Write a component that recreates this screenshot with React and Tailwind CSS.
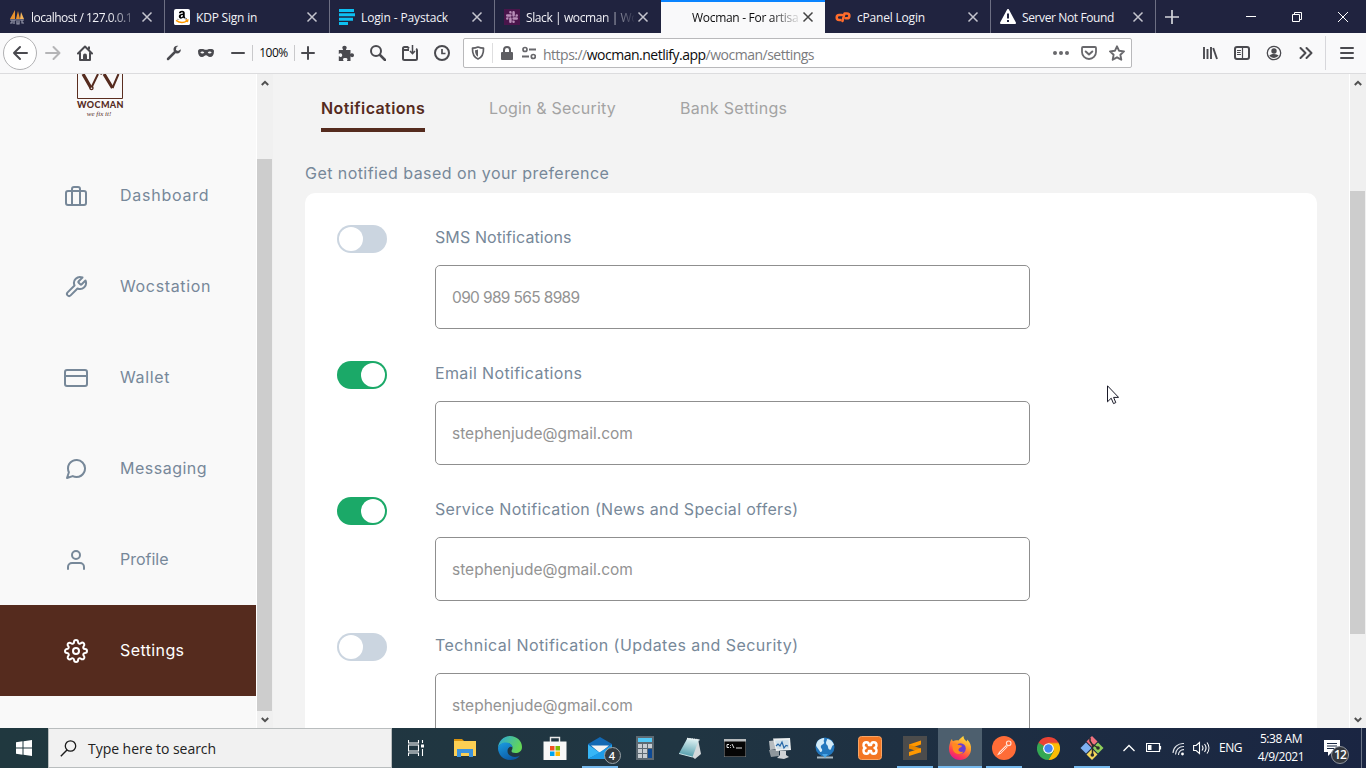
import React from "react";
import { FiBriefcase, FiTool, FiCreditCard, FiMessageCircle, FiUser, FiSettings } from "react-icons/fi";
import { SiSlack } from "react-icons/si";
import { FaAmazon } from "react-icons/fa";

const cx = (...c) => c.filter(Boolean).join(" ");

function Svg({ size = 16, w, h, box, className, children, ...rest }) {
  return (
    <svg
      width={w || size}
      height={h || size}
      viewBox={box || `0 0 ${w || size} ${h || size}`}
      fill="none"
      className={cx("block shrink-0", className)}
      {...rest}
    >
      {children}
    </svg>
  );
}

/* ---------- tab strip ---------- */

const SailIcon = () => (
  <Svg>
    <path d="M1 10 6 1v9zM7 10 9 2l2 8z" fill="#e8912d" />
    <path d="M11 10 12 3l3 7z" fill="#f5b55a" />
    <path d="M1 11h14M1 14h2v-3M5 11v4M8 12v3h2v-3M13 11v3h2" stroke="#9a9cae" strokeWidth="1.2" />
  </Svg>
);
const AmazonIcon = () => (
  <span className="relative block h-4 w-4 shrink-0 overflow-hidden rounded-[2px] bg-white">
    <FaAmazon className="absolute left-[2px] top-[1px] h-3 w-3 text-black" />
    <Svg className="absolute left-0 top-0">
      <path d="M0 10.500h16V16H0z" fill="#fff" />
      <path d="M2 11.300c3.500 2.600 8 2.600 11 .6M11.500 11.200l2.300-.2-.5 2.200" stroke="#f90" strokeWidth="1.500" />
    </Svg>
  </span>
);
const PaystackIcon = () => (
  <Svg>
    <path d="M0 0h15v3H0zM0 4.300h16v3H0zM0 8.700h14v3H0zM0 13h9v3H0z" fill="#0dc0f3" />
  </Svg>
);
const SlackTile = () => (
  <span className="flex h-4 w-4 shrink-0 items-center justify-center bg-[#4a154b]">
    <SiSlack className="h-3 w-3 text-[#b98fb9]" />
  </span>
);
const CpIcon = () => (
  <Svg>
    <path d="M7 6H4.200a2.500 2.500 0 0 0 0 5H5.500" stroke="#ff6c2c" strokeWidth="2.500" strokeLinecap="round" />
    <path d="M7.500 12 9.500 4.500h2.500a2.400 2.400 0 0 1 0 4.800H10.800" stroke="#ff6c2c" strokeWidth="2.500" strokeLinecap="round" strokeLinejoin="round" />
  </Svg>
);
const WarnIcon = () => (
  <Svg>
    <path d="M8 1 15 14H1z" fill="#fff" stroke="#fff" strokeWidth="2" strokeLinejoin="round" />
    <path d="M8 4.500v5M8 11v2" stroke="#20233f" strokeWidth="2" />
  </Svg>
);

const CloseX = ({ dark }) => (
  <Svg size={12} className={dark ? "text-[#444]" : "text-[#c4c5ce]"}>
    <path d="M1.500 1.500l9 9M10.500 1.500l-9 9" stroke="currentColor" strokeWidth="1.500" />
  </Svg>
);

const TABS = [
  { label: "localhost / 127.0.0.1", icon: <SailIcon />, fade: true, track: "tracking-[-0.5px]" },
  { label: "KDP Sign in", icon: <AmazonIcon />, track: "tracking-[-0.2px]" },
  { label: "Login - Paystack", icon: <PaystackIcon />, track: "tracking-[-0.13px]" },
  { label: "Slack | wocman | Wo", icon: <SlackTile />, fade: true, track: "tracking-[-0.4px]" },
  { label: "Wocman - For artisa", icon: null, fade: true, active: true, track: "tracking-[-0.3px]" },
  { label: "cPanel Login", icon: <CpIcon />, track: "tracking-[-0.2px]" },
  { label: "Server Not Found", icon: <WarnIcon />, track: "tracking-[-0.38px]" },
];

function TabStrip() {
  return (
    <div className="flex h-[33px] shrink-0 bg-[#20233f]">
      {TABS.map((t, i) => (
        <div
          key={t.label}
          className={cx(
            "flex h-[33px] shrink-0 items-center border-r pl-[9px] pt-px",
            i === 3 ? "w-[166px] pr-[11px]" : "w-[165px] pr-[11px]",
            t.active
              ? "border-[#20233f] bg-[#f9f9fa] text-[#0c0c0d] shadow-[inset_0_2px_0_#0a84ff]"
              : i === 3
                ? "border-[#20233f] text-[#f2f2f7]"
                : "border-[#6d6f83] text-[#f2f2f7]"
          )}
        >
          {t.icon || <span className="w-4 shrink-0" />}
          <span
            className={cx(
              "ml-[6px] mt-[2px] w-[108px] shrink-0 whitespace-nowrap text-[12px] leading-4",
              t.track,
              t.fade && "[mask-image:linear-gradient(90deg,#000_72%,transparent_102%)]"
            )}
          >
            {t.label}
          </span>
          <span className="ml-auto">
            <CloseX dark={t.active} />
          </span>
        </div>
      ))}
      <div className="flex w-[32px] items-center justify-center">
        <Svg size={14} className="text-[#d4d5db]">
          <path d="M7 0v14M0 7h14" stroke="currentColor" strokeWidth="1.700" />
        </Svg>
      </div>
      <div className="ml-auto flex items-center text-white">
        <span className="flex w-[46px] justify-center">
          <Svg size={10}><path d="M0 4.500h10" stroke="currentColor" /></Svg>
        </span>
        <span className="flex w-[46px] justify-center">
          <Svg size={10}><path d="M.5 2.500h7v7h-7zM2.500 2.500v-2h7v7h-2" stroke="currentColor" /></Svg>
        </span>
        <span className="flex w-[46px] justify-center">
          <Svg size={10}><path d="M0 0l10 10M10 0L0 10" stroke="currentColor" /></Svg>
        </span>
      </div>
    </div>
  );
}

/* ---------- navigation bar ---------- */

const Cell = ({ children, w = "w-8" }) => (
  <span className={cx("flex h-full shrink-0 items-center justify-center", w)}>{children}</span>
);
const stroke = { stroke: "currentColor", strokeWidth: 2, strokeLinecap: "round", strokeLinejoin: "round" };

function NavBar() {
  return (
    <div className="flex h-10 shrink-0 items-center bg-[#f9f9fa] text-[#4a4a4f]">
      <span className="ml-[3px] flex h-[34px] w-[34px] shrink-0 items-center justify-center rounded-full border border-[#b1b1b3] bg-white">
        <Svg><path d="M15 8H2M8 2 2 8l6 6" {...stroke} /></Svg>
      </span>
      <Cell><Svg className="text-[#b5b5b7]"><path d="M1 8h13M8.500 2l6 6-6 6" {...stroke} /></Svg></Cell>
      <Cell>
        <Svg>
          <path d="M1 8.500 8 1.500l7 7" {...stroke} />
          <path d="M3 8v7h10V8" {...stroke} />
          <path d="M6 15v-4.500a2 2 0 0 1 4 0V15z" fill="currentColor" />
          <path d="M12 1.500v3" stroke="currentColor" strokeWidth="2" />
        </Svg>
      </Cell>
      <span className="w-[57px] shrink-0" />
      <Cell>
        <Svg>
          <path d="M2 14l6.500-6.500" stroke="currentColor" strokeWidth="2.500" strokeLinecap="round" />
          <path d="M14.800 4.200 12 6 9.900 4.900 10.500 2l1.800-1.100C9.800.3 7.300 2 7.500 4.800c.1 2.400 1.700 3.700 3.600 3.700 2.300 0 4-1.900 3.700-4.300z" fill="currentColor" />
        </Svg>
      </Cell>
      <Cell>
        <Svg>
          <path d="M0 6c0-1.700 2-2 4-2 1.800 0 2.700.8 4 .8S10.200 4 12 4c2 0 4 .3 4 2 0 4-1.500 6-4 6-2 0-2.700-1.700-4-1.700S6 12 4 12C1.500 12 0 10 0 6zm2.300 1.500c1 1.300 3 1.300 4 .2-.8-1.500-3-1.700-4-.2zm7.400.2c1 1.100 3 1.100 4-.2-1-1.500-3.200-1.300-4 .2z" fill="currentColor" fillRule="evenodd" />
        </Svg>
      </Cell>
      <Cell><Svg size={14}><path d="M1 7h12" {...stroke} /></Svg></Cell>
      <span className="-ml-[2px] h-4 w-px shrink-0 bg-[#c9c9cb]" />
      <span className="flex w-[41px] shrink-0 justify-center text-[12px] leading-4 tracking-[-0.5px] text-[#0c0c0d]">100%</span>
      <span className="h-4 w-px shrink-0 bg-[#c9c9cb]" />
      <Cell w="w-[25px]"><Svg size={14}><path d="M1 7h12M7 1v12" {...stroke} /></Svg></Cell>
      <span className="w-[10px] shrink-0" />
      <Cell>
        <Svg>
          <path d="M6.500.8c1.300 0 2.200.9 2.200 2 0 .8-.7 1.200-.7 2.200h4.500v4c.6 0 .6-.7 1.500-.7 1.200 0 2 .8 2 1.900s-.8 2-2 2c-.9 0-.9-.7-1.500-.7V16H9c0-1 .5-1 .5-1.800S8.500 13 7.200 13s-2.200.5-2.200 1.200S5.500 15 5.500 16H.8v-4.700c.7 0 .9.7 1.700.7 1 0 1.700-.8 1.700-1.800S3.500 8.300 2.500 8.300C1.700 8.300 1.500 9 .8 9V5H5c0-1-.7-1.400-.7-2.200 0-1.100.9-2 2.200-2z" fill="currentColor" />
        </Svg>
      </Cell>
      <Cell><Svg><circle cx="6" cy="6" r="5" stroke="currentColor" strokeWidth="2" /><path d="M10 10l5 5" {...stroke} strokeWidth="2.500" /></Svg></Cell>
      <Cell>
        <Svg>
          <path d="M7 3.500 5.500 2H2.500A1.500 1.500 0 0 0 1 3.500v10A1.500 1.500 0 0 0 2.500 15h11a1.500 1.500 0 0 0 1.500-1.500v-8A1.500 1.500 0 0 0 14 4M1 5h6" stroke="currentColor" strokeWidth="2" />
          <path d="M10.500 0v8M8 6l2.500 2.700L13 6" stroke="currentColor" strokeWidth="1.500" />
        </Svg>
      </Cell>
      <Cell><Svg><circle cx="8" cy="8" r="7" stroke="currentColor" strokeWidth="2" /><path d="M8 4v4.500h3.500" stroke="currentColor" strokeWidth="1.700" /></Svg></Cell>

      <div className="ml-[5px] flex h-[30px] w-[669px] shrink-0 items-center rounded-[2px] border border-[#b9b9bb] bg-white text-[#68686c]">
        <Cell w="w-7">
          <Svg size={14} className="text-[#5f5f63]">
            <path d="M7 1c2 .9 3.800 1.200 5.500 1.200C12.700 7 11.500 11 7 13 2.500 11 1.300 7 1.500 2.200 3.200 2.200 5 1.900 7 1z" stroke="currentColor" strokeWidth="1.700" strokeLinejoin="round" />
            <path d="M7 3.500v7.300C4.900 9.500 4 7.500 4 4.300 5.200 4.200 6.200 3.900 7 3.500z" fill="currentColor" />
          </Svg>
        </Cell>
        <span className="h-5 w-px shrink-0 bg-[#dededf]" />
        <Cell w="w-[28px]">
          <Svg size={14} className="text-[#5f5f63]">
            <path d="M1 7a1 1 0 0 1 1-1h10a1 1 0 0 1 1 1v6a1 1 0 0 1-1 1H2a1 1 0 0 1-1-1z" fill="currentColor" />
            <path d="M4 7V4a3 3 0 0 1 6 0v3" stroke="currentColor" strokeWidth="2" />
          </Svg>
        </Cell>
        <Cell w="w-4">
          <Svg size={14}>
            <circle cx="3" cy="3.500" r="2" stroke="currentColor" strokeWidth="1.700" />
            <path d="M7 3.500h7M0 10.500h7" stroke="currentColor" strokeWidth="2" />
            <circle cx="11.300" cy="10.500" r="2" stroke="currentColor" strokeWidth="1.700" />
          </Svg>
        </Cell>
        <span className="ml-[6px] mt-[3px] whitespace-nowrap text-[14px] leading-5 tracking-[-0.5px] text-[#7b7b7e]">
          https://<span className="text-[#0c0c0d]">wocman.netlify.app</span>/wocman/settings
        </span>
        <span className="ml-auto flex h-full">
          <Cell w="w-7"><Svg><circle cx="2" cy="8" r="2" fill="currentColor" /><circle cx="8" cy="8" r="2" fill="currentColor" /><circle cx="14" cy="8" r="2" fill="currentColor" /></Svg></Cell>
          <Cell w="w-7">
            <Svg>
              <path d="M2 2h12a1 1 0 0 1 1 1v4a7 7 0 0 1-14 0V3a1 1 0 0 1 1-1z" stroke="currentColor" strokeWidth="1.800" />
              <path d="M4.700 6.500 8 9.500l3.300-3" {...stroke} />
            </Svg>
          </Cell>
          <Cell w="w-7">
            <Svg><path d="M8 1.300l2.100 4.500 4.900.6-3.600 3.400.9 4.900L8 12.300l-4.300 2.400.9-4.900L1 6.400l4.900-.6z" stroke="currentColor" strokeWidth="1.900" strokeLinejoin="round" /></Svg>
          </Cell>
        </span>
      </div>

      <span className="w-[62px] shrink-0" />
      <Cell><Svg><path d="M2 2v12M5.500 4v10M9 2v12M11.200 3l3.800 11" stroke="currentColor" strokeWidth="1.900" /></Svg></Cell>
      <Cell>
        <Svg>
          <rect x="1" y="2" width="14" height="12" rx="2" stroke="currentColor" strokeWidth="2" />
          <path d="M8.500 2v12M3 5.500h4M3 7.500h3.500M3 9.500h4" stroke="currentColor" strokeWidth="1.200" />
        </Svg>
      </Cell>
      <Cell>
        <Svg>
          <circle cx="8" cy="8" r="6.700" stroke="currentColor" strokeWidth="1.300" />
          <circle cx="8" cy="6" r="2.700" fill="currentColor" />
          <path d="M3.300 10.300c1.500-.3 2.200-1.200 4.700-1.200s3.200.9 4.700 1.200A5.500 5.500 0 0 1 8 13a5.500 5.500 0 0 1-4.700-2.700z" fill="currentColor" />
        </Svg>
      </Cell>
      <Cell><Svg><path d="M2.500 3l5 5-5 5M8.500 3l5 5-5 5" {...stroke} /></Svg></Cell>
      <span className="ml-[3px] h-[34px] w-px shrink-0 bg-[#d7d7db]" />
      <Cell w="w-[42px]"><Svg size={14}><path d="M1 2h12M1 7h12M1 12h12" stroke="currentColor" strokeWidth="2" strokeLinecap="round" /></Svg></Cell>
    </div>
  );
}

/* ---------- page ---------- */

const Chevron = ({ up }) => (
  <Svg w={8} h={6}>
    <path d={up ? "M.8 5 4 1.800 7.200 5" : "M.8 1 4 4.200 7.200 1"} stroke="#505050" strokeWidth="2" />
  </Svg>
);

function Scrollbar({ thumb }) {
  return (
    <div className="flex w-[17px] shrink-0 flex-col border-l border-white bg-[#f0f0f0] pr-px">
      <div className="flex h-[17px] shrink-0 items-center justify-center"><Chevron up /></div>
      <div className="min-h-0 flex-1">
        <div className={cx("bg-[#cdcdcd]", thumb)} />
      </div>
      <div className="flex h-[17px] shrink-0 items-center justify-center"><Chevron /></div>
    </div>
  );
}

const MENU = [
  ["Dashboard", FiBriefcase, "tracking-[0.75px]"],
  ["Wocstation", FiTool, "tracking-[0.65px]"],
  ["Wallet", FiCreditCard, "tracking-[0.65px]"],
  ["Messaging", FiMessageCircle, "tracking-[0.5px]"],
  ["Profile", FiUser, "tracking-[0px]"],
  ["Settings", FiSettings, "tracking-[0.4px]"],
];

function Logo() {
  return (
    <div className="flex h-[76px] shrink-0 flex-col items-start pl-[76px]">
      <Svg w={48} h={26}>
        <path d="M1.500 0v24.500h45V0" stroke="#5b2e20" />
        <path d="M7 0l8 14M28 0l8.500 14" stroke="#552b1e" strokeWidth="3.200" />
        <path d="M15.500 13.500 22 0M26 0l-2-1M36.500 14 42.500 0" stroke="#552b1e" strokeWidth="2" />
        <circle cx="15.500" cy="14" r="2.200" fill="#552b1e" />
        <circle cx="15.500" cy="14.300" r=".8" fill="#f9f9f9" />
      </Svg>
      <span className="mt-[-1px] flex w-[49px] justify-center font-['Lato'] text-[9px] font-black leading-[12px] tracking-[0.4px] text-[#552b1e]">WOCMAN</span>
      <span className="mt-[-1px] w-[46px] text-center font-['Liberation_Serif'] text-[7px] italic leading-[9px] text-[#552b1e]">we fix it!</span>
    </div>
  );
}

function Sidebar() {
  return (
    <div className="flex w-64 shrink-0 flex-col overflow-hidden bg-[#f9f9f9]">
      <Logo />
      {MENU.map(([label, Icon, track]) => {
        const on = label === "Settings";
        return (
          <div key={label} className={cx("flex h-[91px] shrink-0 items-center pl-16", on ? "bg-[#552b1e] text-white" : "text-[#778899]")}>
            <Icon className="mt-px h-6 w-6 shrink-0" />
            <span className={cx("mb-[2px] ml-8 text-[16px] leading-6", track)}>{label}</span>
          </div>
        );
      })}
    </div>
  );
}

const SETTINGS = [
  ["SMS Notifications", "090 989 565 8989", false, "tracking-[0.1px]", "tracking-[-0.65px]"],
  ["Email Notifications", "stephenjude@gmail.com", true, "tracking-[0.37px]", ""],
  ["Service Notification (News and Special offers)", "stephenjude@gmail.com", true, "tracking-[0.32px]", ""],
  ["Technical Notification (Updates and Security)", "stephenjude@gmail.com", false, "tracking-[0.44px]", ""],
];

function Toggle({ on }) {
  return (
    <span className={cx("flex h-7 w-[50px] shrink-0 items-center rounded-full px-[2px]", on ? "justify-end bg-[#1ba968]" : "bg-[#cbd5e0]")}>
      <span className="block h-6 w-6 rounded-full bg-white" />
    </span>
  );
}

function Main() {
  return (
    <div className="min-w-0 flex-1 overflow-hidden bg-[#f3f3f3] pl-8 pr-8">
      <div className="flex gap-16 pl-4 pt-[22px] text-[16px] leading-6">
        <span className="h-9 w-[104px] whitespace-nowrap border-b-4 border-[#552b1e] font-semibold tracking-[0.4px] text-[#552b1e]">Notifications</span>
        <span className="w-[127px] whitespace-nowrap tracking-[0.18px] text-[#a3a3a3]">Login &amp; Security</span>
        <span className="whitespace-nowrap tracking-[0.3px] text-[#a3a3a3]">Bank Settings</span>
      </div>
      <p className="mt-[29px] text-[16px] leading-6 tracking-[0.44px] text-[#778899]">Get notified based on your preference</p>
      <div className="mt-[8px] flex flex-col gap-8 rounded-[10px] bg-white p-8">
        {SETTINGS.map(([label, value, on, track, vtrack]) => (
          <div key={label} className="flex h-[104px] shrink-0 gap-12">
            <Toggle on={on} />
            <div className="flex w-[595px] flex-col">
              <span className={cx("h-10 whitespace-nowrap text-[16px] leading-6 text-[#778899]", track)}>{label}</span>
              <div className={cx("flex h-16 items-center rounded-[5px] border border-[#8f8f8f] pl-4 pt-[2px] text-[15.500px] leading-6 text-[#939393]", vtrack)}>{value}</div>
            </div>
          </div>
        ))}
      </div>
    </div>
  );
}

/* ---------- taskbar ---------- */

const Explorer = () => (
  <Svg size={24}>
    <path d="M1 3h8l2 2H1z" fill="#d9930d" />
    <path d="M1 5h22v15H1z" fill="#fccf53" />
    <path d="M4 21v-8h16v8h-4v-4H8v4z" fill="#3c93dd" />
  </Svg>
);
const Edge = () => (
  <Svg size={24}>
    <defs>
      <linearGradient id="edgeTop" x1="0" y1="0" x2="1" y2="0.4"><stop stopColor="#2aa5e0" /><stop offset="1" stopColor="#63d657" /></linearGradient>
      <linearGradient id="edgeBody" x1="0" y1="0" x2="0.6" y2="1"><stop stopColor="#1b9de2" /><stop offset="1" stopColor="#0c59a4" /></linearGradient>
    </defs>
    <path d="M0 12C.3 5 5.500 0 12 0c7 0 12 5 12 11 0 4-3 6-6.500 6-3 0-4-1-4-2s1-1.300 1-3.300C14.500 9 12 7 8.500 7 4 7 1 9 0 12z" fill="url(#edgeTop)" />
    <path d="M0 12c1-3.500 4-5.500 8-5.500 3.500 0 6.500 2 6.500 5-1.500-1.500-5-.5-5 3.500s4 6 7.500 6c2 0 4-.8 5-1.500C20 22.500 16 24 12 24 5 24 0 18.500 0 12z" fill="url(#edgeBody)" />
  </Svg>
);
const Store = () => (
  <Svg size={24}>
    <path d="M7.500 6V1.500h9V6" stroke="#e9e9e9" strokeWidth="1.400" />
    <path d="M.5 5.500h23V24H.5z" fill="#f7f7f7" />
    <path d="M7 10h4.500v4.500H7z" fill="#f25022" /><path d="M12.500 10H17v4.500h-4.500z" fill="#7fba00" />
    <path d="M7 15.500h4.500V20H7z" fill="#00a4ef" /><path d="M12.500 15.500H17V20h-4.500z" fill="#ffb900" />
  </Svg>
);
const Mail = () => (
  <span className="relative">
    <Svg size={24}>
      <path d="M0 8 12 1l12 7v3L12 18 0 11z" fill="#1268b3" />
      <path d="M3 9.500h18L12 17z" fill="#f3f3f3" />
      <path d="M0 8.500 12 17 0 23z" fill="#37b6f6" /><path d="M24 8.500 12 16 0 23h24z" fill="#1e9ce8" />
    </Svg>
    <span className="absolute -right-[9px] top-[11px] flex h-[17px] w-[17px] items-center justify-center rounded-full border border-[#9aa3a8] bg-[#333b40] text-[11px] font-semibold leading-none text-white">4</span>
  </span>
);
const Calc = () => (
  <Svg w={18} h={24}>
    <path d="M0 0h18v24H0z" fill="#5d6a73" /><path d="M2 2h14v4H2z" fill="#53c8f5" />
    <path d="M2 8h4v4H2zM7 8h4v4H7zM12 8h4v4h-4zM2 13h4v4H2zM7 13h4v4H7zM2 18h4v4H2zM7 18h4v4H7z" fill="#c7cdd2" />
    <path d="M12 13h4v9h-4z" fill="#0c4a96" />
  </Svg>
);
const Notepad = () => (
  <Svg size={24}>
    <defs>
      <linearGradient id="pad" x1="0.6" y1="0" x2="0.4" y2="1"><stop stopColor="#e3f4f5" /><stop offset="1" stopColor="#4d9aa9" /></linearGradient>
    </defs>
    <path d="M20 3l3 15-6 5-4-3z" fill="#d3d9db" />
    <path d="M9.500 2 21 3.500 14.500 21 1 17.500z" fill="url(#pad)" />
    <path d="M9 2.500l12.500 1.500" stroke="#eef2f3" strokeWidth="1.500" strokeDasharray="1.500 .8" />
    <path d="M1 17.500 14.500 21" stroke="#c9e2e6" />
  </Svg>
);
const Cmd = () => (
  <Svg w={22} h={18}>
    <path d="M0 0h22v18H0z" fill="#050505" stroke="#8f9294" /><path d="M0 0h22v2.500H0z" fill="#b8bcbe" />
    <path d="M5 5.500H3v3h2M6.500 6v.8M6.500 8v.8M8 5l2 4M12 9h6" stroke="#e5e5e5" strokeWidth="1" />
  </Svg>
);
const Monitor = () => (
  <Svg size={24}>
    <path d="M1 5l9-1v9L2 14z" fill="#b6bcc0" /><path d="M1 14h10v6l-8 1z" fill="#8f979c" />
    <path d="M5 2.500 22 2l1 12-15 1z" fill="#eceff0" /><path d="M7 4.500l13.500-.5.7 8.500L9 13z" fill="#cfe0ea" />
    <path d="M8 10l2-2 2 2 2-4 2 6 2-2.500 2 .5" stroke="#2567a8" strokeWidth="1.200" /><path d="M12 15h6v4l3 2-5 2-7-1 3-3z" fill="#cfd3d6" />
  </Svg>
);
const Globe = () => (
  <Svg size={24}>
    <circle cx="12" cy="11" r="9.500" fill="#2377bd" />
    <path d="M4 6c2-3 5-4 7-4 1 2-1 2 0 4s-2 2-3 4 2 3 1 5-2 1-3-1-3-3-3-5zM14 3c4 .5 6 3 7 6-2 0-2 2-3 4s-3 0-3-2-2-2-2-4 1-2 1-4z" fill="#d3ebf8" />
    <path d="M4 21.500h16" stroke="#a9b8c0" strokeWidth="2" /><path d="M9 18l3 4 3-4z" fill="#4aa7e8" />
  </Svg>
);
const Xampp = () => (
  <Svg size={24}>
    <rect x=".5" y=".5" width="23" height="23" rx="3" fill="#f37623" stroke="#f8a565" />
    <path
      d="M7.500 12c-1.300-.4-2-1.300-2-2.700 0-1.800 1.200-3 2.900-3 1.600 0 2.500 1 2.500 2.700h2.200c0-1.700.9-2.700 2.500-2.700 1.700 0 2.900 1.200 2.900 3 0 1.400-.7 2.300-2 2.700 1.300.4 2 1.300 2 2.700 0 1.800-1.200 3-2.900 3-1.600 0-2.500-1-2.500-2.700h-2.200c0 1.700-.9 2.700-2.500 2.700-1.700 0-2.900-1.200-2.900-3 0-1.400.7-2.300 2-2.700z"
      stroke="#fff"
      strokeWidth="2.400"
      strokeLinejoin="round"
    />
  </Svg>
);
const Sublime = () => (
  <Svg size={24}>
    <path d="M0 0h24v24H0z" fill="#4c4c4c" />
    <path d="M6 8.500 18 4.500v4L6 12.500z" fill="#ff9800" /><path d="M6 8.500l12 4v4l-12-4z" fill="#e58600" /><path d="M6 16l12-3.700v4L6 20z" fill="#ff9800" />
  </Svg>
);
const Firefox = () => (
  <Svg size={24}>
    <defs>
      <linearGradient id="fox" x1="0.8" y1="0" x2="0.3" y2="1"><stop stopColor="#ffe845" /><stop offset=".4" stopColor="#ff9a2a" /><stop offset=".75" stopColor="#ff3f4f" /><stop offset="1" stopColor="#e3158a" /></linearGradient>
    </defs>
    <path d="M2 7c.3-1.700 1-3 2-4 0 1 .3 1.700 1 2.300C7 4 9 4 10.500 4.500 12 2.500 14 1 15.500 0c0 3 1.500 3.500 3 5.500.5-.5.500-1 .5-2 3 2.500 4.500 6 4 10.500C22.300 20 17.500 24 12 24 5.500 24 1 19 1 13c0-2.300.3-4 1-6z" fill="url(#fox)" />
    <circle cx="12.500" cy="12.500" r="5.300" fill="#6a3fd0" />
    <path d="M4 8c3-1.500 5-.5 6.500 1 1 .2 3 0 3.500 1-.5 1.500-3 1.500-3.500 3.500s3 3 5 2c-2 4-9 3-10.500-1.500C4.500 12 4.500 10 4 8z" fill="#ff8a1f" />
  </Svg>
);
const Postman = () => (
  <Svg size={24}>
    <circle cx="12" cy="12" r="12" fill="#ff6c37" />
    <path d="M5 19.500l2-3.500 7-7 1.800 1.800-7 7z" fill="#ffe3d8" />
    <path d="M8 17l6.500-6.500" stroke="#ff6c37" strokeWidth=".8" />
    <circle cx="16.700" cy="7.300" r="2.300" fill="#ff6c37" stroke="#ffe3d8" strokeWidth="1.100" />
  </Svg>
);
const Chrome = () => (
  <Svg w={23} h={23} box="0 0 24 24">
    <path d="M12 12 1.600 6A12 12 0 0 1 22.400 6z" fill="#ea4335" /><path d="M1.600 6A12 12 0 0 0 12 24l5.200-9z" fill="#34a853" />
    <path d="M22.400 6A12 12 0 0 1 12 24l5.500-9.500L12 6z" fill="#fbbc05" /><path d="M1.600 6 7 15l5-8.500h10.600L22.400 6z" fill="#ea4335" />
    <path d="M1.600 6 7 15l5 3-5-9z" fill="#34a853" />
    <circle cx="12" cy="12" r="5.600" fill="#fff" /><circle cx="12" cy="12" r="4.400" fill="#4285f4" />
  </Svg>
);
const Git = () => (
  <Svg size={24}>
    <path d="M12 0l5.500 5.500-5.500 5.500-5.500-5.500z" fill="#f2727f" /><path d="M6 6.500 11.500 12 6 17.500.5 12z" fill="#7fb1f2" />
    <path d="M18 6.500l5.500 5.500-5.500 5.500-5.500-5.500z" fill="#8fce5a" /><path d="M12 13l5.500 5.500L12 24l-5.500-5.500z" fill="#f6d75b" />
    <path d="M10 2v3l2.500 4v10M12 8l6 4" stroke="#2b2b2b" strokeWidth="1.500" />
    <circle cx="12.300" cy="19" r="1.800" fill="#2b2b2b" /><circle cx="18" cy="12" r="1.800" fill="#2b2b2b" />
  </Svg>
);

const APPS = [
  ["explorer", Explorer], ["edge", Edge], ["store", Store], ["mail", Mail, true], ["calc", Calc], ["notepad", Notepad],
  ["cmd", Cmd], ["monitor", Monitor], ["globe", Globe], ["xampp", Xampp], ["sublime", Sublime, true],
  ["firefox", Firefox, true], ["postman", Postman, true], ["chrome", Chrome], ["git", Git, true],
];

function Taskbar() {
  return (
    <div className="flex h-10 shrink-0 bg-linear-to-r from-[#20383f] via-[#203542] to-[#1a2542] font-['Open_Sans','Noto_Sans',sans-serif] text-white">
      <div className="flex w-12 shrink-0 items-center justify-center">
        <Svg><path d="M0 2.200 6.500 1.300v6.200H0zM7.500 1.200 16 0v7.500H7.500zM0 8.500h6.500v6.200L0 13.800zM7.500 8.500H16V16l-8.500-1.200z" fill="#fff" /></Svg>
      </div>
      <div className="flex w-[344px] shrink-0 items-center border border-[#b9bdbe] bg-[#f1f1f1] pl-[11px] text-[#222]">
        <Svg w={17} h={17}><circle cx="10.500" cy="6" r="5.200" stroke="#1b1b1b" strokeWidth="1.300" /><path d="M7 10 .8 16.200" stroke="#1b1b1b" strokeWidth="1.400" /></Svg>
        <span className="ml-[11px] mt-[2px] text-[14px] leading-5 tracking-[-0.04px]">Type here to search</span>
      </div>
      <div className="flex w-[50px] shrink-0 items-center pl-[16px]">
        <Svg>
          <path d="M.5 0v3h10V0M.5 16v-3h10v3M.5 5h10v6H.5zM14.500 0v3M14.500 9v7" stroke="#fff" strokeWidth="1.100" /><path d="M13 4.500h3v3h-3z" fill="#fff" />
        </Svg>
      </div>
      {APPS.map(([id, Icon, open], i) => {
        const focus = id === "firefox";
        return (
          <div key={id} className={cx("flex shrink-0 flex-col items-center", i > 10 ? "w-[44px]" : "w-[45px]", focus && "ml-px")}>
            <div className={cx("flex h-[38px] w-full items-center justify-center pt-[2px]", focus && "bg-[#4d5f6e]")}><Icon /></div>
            {open && <div className={cx("h-[2px] bg-[#76b9ed]", focus ? "w-full" : "w-9")} />}
          </div>
        );
      })}
      <div className="flex flex-1 items-center pl-[9px]">
        <Svg w={12} h={8}><path d="M.5 7 6 1.500 11.500 7" stroke="#fff" strokeWidth="1.300" /></Svg>
        <Svg w={16} h={10} className="ml-[11px]"><path d="M.5.500h13v8H.5zM14.500 3v3.500" stroke="#fff" strokeWidth="1.200" /><path d="M2 2h3.500v5H2z" fill="#fff" /></Svg>
        <Svg w={14} h={14} className="ml-[10px] mt-[2px]">
          <path d="M1 11A10 10 0 0 1 12 1.500M3.500 12.500A8 8 0 0 1 12 4.500M6.500 13A5 5 0 0 1 12 7.700" stroke="#e4e7ec" strokeWidth="1.100" /><circle cx="10.500" cy="12" r="1.400" fill="#fff" />
        </Svg>
        <Svg w={17} h={14} className="ml-[7px]">
          <path d="M.6 4.500h2.500L6.500 1.500v11L3.100 9.500H.6zM9 4.500a4 4 0 0 1 0 5M11.500 3a6.500 6.500 0 0 1 0 8M14 1.500a9 9 0 0 1 0 11" stroke="#fff" strokeWidth="1.100" />
        </Svg>
        <span className="ml-[9px] w-[24px] whitespace-nowrap text-[12px] leading-4 tracking-[-0.5px]">ENG</span>
        <span className="ml-[12px] flex w-[52px] flex-col items-center whitespace-nowrap text-[12px] leading-[18px] tracking-[-0.45px]">
          <span>5:38 AM</span>
          <span>4/9/2021</span>
        </span>
        <span className="relative ml-[17px] mt-[1px]">
          <Svg w={16} h={17}><path d="M0 0h16v12H8l-4 4v-4H0z" fill="#fff" /><path d="M3 3.500h10M3 6h10M3 8.500h7" stroke="#1c2a44" /></Svg>
          <span className="absolute left-[7px] top-[6px] flex h-[18px] w-[18px] items-center justify-center rounded-full border border-[#8e939b] bg-[#33373e] text-[12px] font-semibold leading-none tracking-[-0.8px]">12</span>
        </span>
        <span className="ml-auto mr-[4px] h-10 w-px bg-[#6b7486]" />
      </div>
    </div>
  );
}

export default function App() {
  return (
    <div className="relative flex h-[768px] w-[1366px] flex-col overflow-hidden font-['Open_Sans','Noto_Sans',sans-serif]">
      <TabStrip />
      <NavBar />
      <div className="flex min-h-0 flex-1 border-t border-[#dcdcde] font-['Inter',sans-serif]">
        <Sidebar />
        <Scrollbar thumb="mt-[68px] h-[552px]" />
        <Main />
        <Scrollbar thumb="mt-[100px] h-[443px]" />
      </div>
      <Taskbar />
      <Svg w={12} h={20} className="absolute left-[1107px] top-[385px]">
        <path d="M.5.800v16l3.700-3.600 2.300 5.400 2.300-1-2.200-5.200h5z" fill="#fff" stroke="#1a1a28" />
      </Svg>
    </div>
  );
}
